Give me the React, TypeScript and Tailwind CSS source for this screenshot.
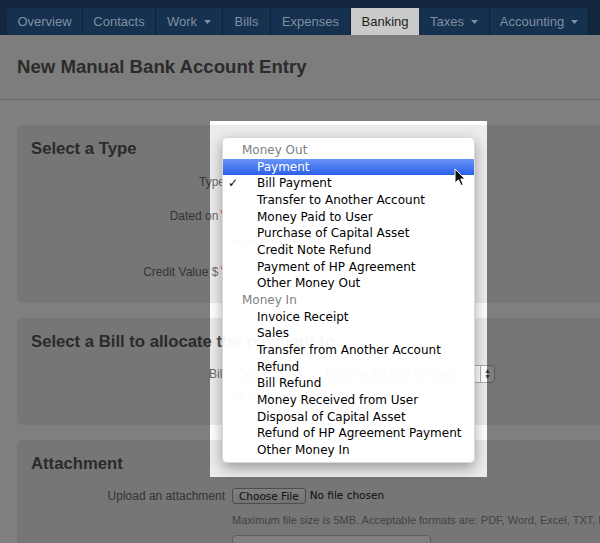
import type { ReactNode } from 'react';

type Tab = { label: string; width: number; caret?: boolean; active?: boolean };

const TABS: Tab[] = [
  { label: 'Overview', width: 76 },
  { label: 'Contacts', width: 73 },
  { label: 'Work', width: 67, caret: true },
  { label: 'Bills', width: 48 },
  { label: 'Expenses', width: 80 },
  { label: 'Banking', width: 68, active: true },
  { label: 'Taxes', width: 71, caret: true },
  { label: 'Accounting', width: 99, caret: true },
];

const MENU = [
  {
    group: 'Money Out',
    items: [
      'Payment',
      'Bill Payment',
      'Transfer to Another Account',
      'Money Paid to User',
      'Purchase of Capital Asset',
      'Credit Note Refund',
      'Payment of HP Agreement',
      'Other Money Out',
    ],
  },
  {
    group: 'Money In',
    items: [
      'Invoice Receipt',
      'Sales',
      'Transfer from Another Account',
      'Refund',
      'Bill Refund',
      'Money Received from User',
      'Disposal of Capital Asset',
      'Refund of HP Agreement Payment',
      'Other Money In',
    ],
  },
];

const HIGHLIGHTED = 'Payment';
const CHECKED = 'Bill Payment';

function Caret() {
  return (
    <svg width="7" height="4" viewBox="0 0 7 4" className="ml-[7px]">
      <path d="M0 0 L7 0 L3.5 4 Z" fill="#7f8fa0" />
    </svg>
  );
}

function NavBar() {
  return (
    <div className="relative z-30 h-[35px] bg-[#12273e] pt-[8px] pl-[7px]">
      <div className="flex h-[27px] w-fit overflow-hidden rounded-t-[4px] bg-[#163150]">
        {TABS.map((tab) => (
          <div
            key={tab.label}
            style={{ width: tab.width }}
            className={
              tab.active
                ? 'flex items-center justify-center bg-[#cacaca] text-[13px] text-[#1e1e1e]'
                : 'flex items-center justify-center border-r border-[#0d2034] text-[13px] text-[#7f8fa0]'
            }
          >
            {tab.label}
            {tab.caret && <Caret />}
          </div>
        ))}
      </div>
    </div>
  );
}

function Row({ label, required, children, className }: { label: string; required?: boolean; children?: ReactNode; className?: string }) {
  return (
    <div className={`flex items-center ${className ?? ''}`}>
      <div className="w-[208px] text-right text-[12px] text-[#6b6b6b]">
        {label}
        {required && <span className="ml-[2px] align-[2px] text-[#d01010]">*</span>}
      </div>
      <div className="ml-[7px] flex items-center">{children}</div>
    </div>
  );
}

function Panel({ title, className, children }: { title: string; className?: string; children?: ReactNode }) {
  return (
    <div className={`-mr-[20px] rounded-[6px] bg-[#ececec] pt-[14px] ${className ?? ''}`}>
      <h2 className="pl-[14px] text-[16.7px] leading-[20px] font-bold text-[#555]">{title}</h2>
      {children}
    </div>
  );
}

function Page() {
  return (
    <>
      <div className="flex h-[65px] items-center border-b border-[#d2d2d2] bg-[#fafafa] pl-[17px]">
        <h1 className="text-[18.6px] font-bold text-[#575757]">New Manual Bank Account Entry</h1>
      </div>
      <div className="flex flex-col gap-[15px] pt-[25px] pl-[17px]">
        <Panel title="Select a Type" className="h-[178px]">
          <Row label="Type" className="mt-[12px] h-[22px]">
            <div className="h-[20px] w-[180px] rounded-[4px] border border-[#b5b5b5] bg-white" />
          </Row>
          <Row label="Dated on" required className="mt-[11px] h-[22px]">
            <div className="h-[22px] w-[100px] rounded-[3px] border border-[#bdbdbd] bg-white" />
          </Row>
          <div className="mt-[7px] pl-[215px] text-[11px] text-[#999]">dd/mm/yyyy</div>
          <Row label="Credit Value $" required className="mt-[10px] h-[22px]">
            <div className="h-[22px] w-[100px] rounded-[3px] border border-[#bdbdbd] bg-white" />
          </Row>
        </Panel>

        <Panel title="Select a Bill to allocate the payment to" className="h-[107px]">
          <Row label="Bill" className="mt-[12px] h-[20px]">
            <div className="flex h-[18px] w-[263px] items-center rounded-[4px] border border-[#b0b0b0] bg-white text-[11px] text-[#666]">
              <span className="flex-1 truncate pl-[6px] font-['DejaVu_Sans',sans-serif]">Select a Bill... - Pending $0,240.00 due</span>
              <span className="flex h-full w-[14px] flex-col items-center justify-center border-l border-[#b0b0b0] text-[7px] leading-[6px] text-[#555]">
                <span>▲</span>
                <span>▼</span>
              </span>
            </div>
          </Row>
          <div className="mt-[4px] pl-[216px] text-[11px] text-[#888]">Or create a new bill</div>
        </Panel>

        <Panel title="Attachment" className="h-[140px] pt-[13px]">
          <Row label="Upload an attachment" className="mt-[13px] h-[18px]">
            <button className="h-[16px] rounded-[3px] border border-[#9a9a9a] bg-linear-to-b from-white to-[#e6e6e6] px-[6px] font-['DejaVu_Sans',sans-serif] text-[10.5px] leading-[14px] text-[#222]">
              Choose File
            </button>
            <span className="ml-[4px] font-['DejaVu_Sans',sans-serif] text-[10.5px] text-[#222]">No file chosen</span>
          </Row>
          <div className="mt-[7px] pl-[215px] text-[11px] whitespace-nowrap text-[#878787]">
            Maximum file size is 5MB. Acceptable formats are: PDF, Word, Excel, TXT, Images
          </div>
          <div className="mt-[6px] ml-[215px] h-[22px] w-[199px] rounded-[4px] border border-[#bdbdbd] bg-white" />
        </Panel>
      </div>
    </>
  );
}

function TypeMenu() {
  return (
    <div className="absolute top-[137px] left-[222px] z-10 w-[253px] rounded-[5px] border border-[#dadada] bg-white/[0.96] py-[4px] font-['DejaVu_Sans',sans-serif] text-[12px] shadow-[0_5px_14px_rgba(0,0,0,0.35)]">
      {MENU.map((g) => (
        <div key={g.group}>
          <div className="h-[16.67px] pl-[19px] leading-[16.67px] text-[#808080]">{g.group}</div>
          {g.items.map((item) => {
            const hi = item === HIGHLIGHTED;
            return (
              <div
                key={item}
                className={
                  hi
                    ? 'flex h-[16.67px] items-center bg-linear-to-b from-[#6994f8] to-[#2b5ee9] leading-[16.67px] text-white'
                    : 'flex h-[16.67px] items-center leading-[16.67px] text-black'
                }
              >
                <span className="w-[34px] pl-[5px]">{item === CHECKED ? '✓' : ''}</span>
                <span>{item}</span>
              </div>
            );
          })}
        </div>
      ))}
    </div>
  );
}

function Cursor() {
  return (
    <svg className="absolute top-[168px] left-[454px] z-10" width="13" height="20" viewBox="0 0 13 20">
      <path
        d="M1 1 L1 15 L4.5 11.8 L7 17.5 L9.2 16.6 L6.8 11 L11.2 11 Z"
        fill="#111"
        stroke="#fff"
        strokeWidth="1"
        strokeLinejoin="round"
      />
    </svg>
  );
}

export default function App() {
  return (
    <div className="relative h-[543px] w-[600px] overflow-hidden bg-white font-['Liberation_Sans',Arial,sans-serif]">
      <NavBar />
      <Page />
      <TypeMenu />
      <Cursor />
      {/* dimmed page with the popup area left clear */}
      <div className="pointer-events-none absolute top-[121px] left-[210px] z-20 h-[356px] w-[277px] shadow-[0_0_0_2000px_rgba(0,0,0,0.5)]" />
    </div>
  );
}
